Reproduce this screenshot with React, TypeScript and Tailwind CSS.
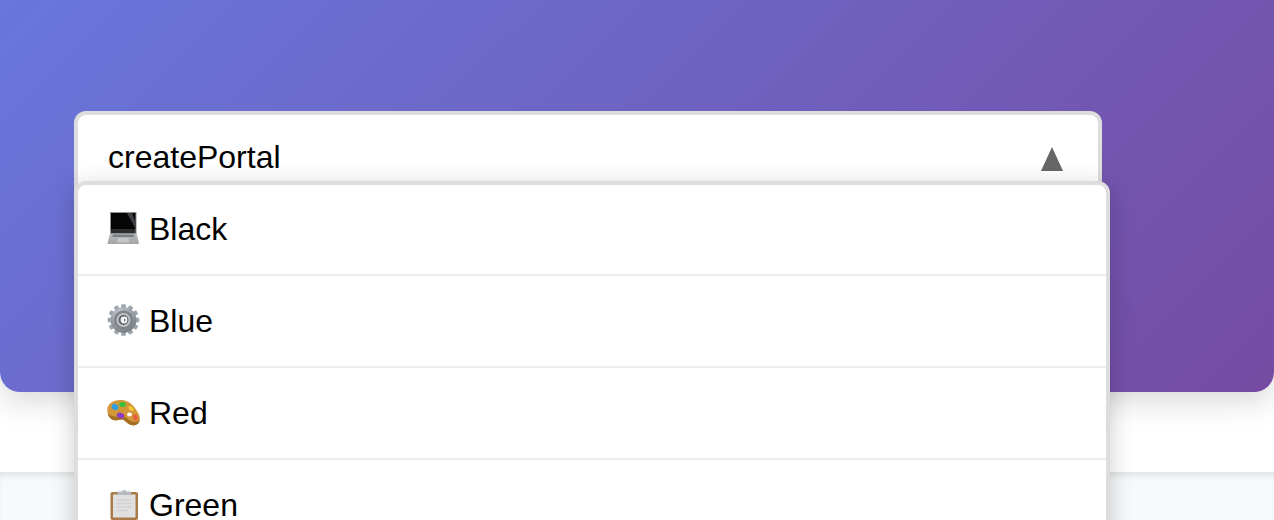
import React from "react"

function LaptopIcon() {
  return (
    <svg width="34" height="34" viewBox="0 0 34 34" className="shrink-0">
      <defs>
        <linearGradient id="lapBase" x1="0" y1="0" x2="0" y2="1">
          <stop offset="0" stopColor="#b9bbbd" />
          <stop offset="1" stopColor="#a2a4a6" />
        </linearGradient>
      </defs>
      <path d="M3 0h26.5v22H3z" fill="#8d8f91" />
      <path d="M4 1h24.5v16H4z" fill="#050505" />
      <path d="M20 1h5l3.5 9v7z" fill="#3d3f42" />
      <path d="M4 17h24.500v4.500H4z" fill="#2c2d2f" />
      <path d="M3 21.500h26.500l2.500 9.500q0 1-1 1H1.500q-1 0-1-1z" fill="url(#lapBase)" />
      <path d="M6 22.500h20.500l.8 2.500H5.200z" fill="#7c7e80" />
      <path d="M11 26h10.500l.8 4.500H10.200z" fill="#c4c6c8" />
    </svg>
  )
}

function GearIcon() {
  const teeth = [0, 30, 60, 90, 120, 150, 180, 210, 240, 270, 300, 330]
  return (
    <svg width="34" height="34" viewBox="0 0 34 34" className="shrink-0">
      <defs>
        <radialGradient id="gearFace" cx="0.4" cy="0.25" r="0.85">
          <stop offset="0" stopColor="#c6ccd2" />
          <stop offset="1" stopColor="#6f7479" />
        </radialGradient>
      </defs>
      {teeth.map((a) => (
        <path key={a} d="M13.300 8L14.500 0.200h4L19.700 8z" fill="#9aa6b0" transform={`rotate(${a} 16.500 16)`} />
      ))}
      <circle cx="16.500" cy="16" r="12.800" fill="url(#gearFace)" />
      <circle cx="16.500" cy="16" r="9.500" fill="#80848a" />
      <circle cx="16.500" cy="16" r="7" fill="#bfc3c8" />
      <circle cx="16.500" cy="16" r="5" fill="#5f6267" />
      <circle cx="17" cy="16" r="3.400" fill="#f4f5f6" />
      <path d="M17 14.500a1.500 1.500 0 0 1 0 3z" fill="#6a6d71" />
    </svg>
  )
}

function PaletteIcon() {
  return (
    <svg width="34" height="34" viewBox="0 0 34 34" className="shrink-0">
      <path d="M0.300 14C0 7.500 7 3.500 14.500 4 21.500 4.500 26 8.500 29 13.500c2.200 3.500 4.300 6.500 3.800 10C32.300 28 28.500 30 24.300 29c-4-1-5.300-4.200-8.300-5.300-3-1-5.500 1.300-9 .5C2.500 23 .6 19.500.3 14z" fill="#d3973a" />
      <path d="M0.500 16.500c.8 4 2.800 6.800 6.500 7.700 3.500.8 6-1.500 9-.5 3 1.100 4.300 4.300 8.300 5.300 4.200 1 8-1 8.500-5.500-2 2.500-5 3-8 2-3.500-1.300-5-4.200-8-5.200-3-1-6 .8-9.300.3-3.300-.6-5.500-2-7-3.600z" fill="#a56f25" />
      <ellipse cx="8" cy="11" rx="3.500" ry="2.800" fill="#2b9fe6" transform="rotate(30 8 11)" />
      <ellipse cx="15.500" cy="8.500" rx="3.300" ry="2.500" fill="#36c23a" />
      <ellipse cx="24" cy="12.500" rx="3" ry="1.800" fill="#efc93a" transform="rotate(40 24 12.500)" />
      <ellipse cx="13.500" cy="19.500" rx="3.800" ry="2.700" fill="#8c3cc9" transform="rotate(20 13.500 19.500)" />
      <ellipse cx="22.500" cy="18.500" rx="2.400" ry="1.900" fill="#ffffff" />
      <ellipse cx="28.500" cy="21.500" rx="2.300" ry="3" fill="#ee5a3c" transform="rotate(-15 28.500 21.500)" />
    </svg>
  )
}

function ClipboardIcon() {
  return (
    <svg width="34" height="34" viewBox="0 0 34 34" className="shrink-0">
      <rect x="3.500" y="4" width="27.500" height="28" rx="2" fill="#a97a45" />
      <rect x="6" y="6.500" width="22.500" height="23" fill="#e0e0e0" />
      <path d="M9 12h16M9 15.500h16M9 19h16M9 22.500h12" stroke="#d2d2d2" strokeWidth="1.500" />
      <path d="M10.500 3.500h4.500q2.300-3.500 4.600 0h4.400v3.500H10.500z" fill="#b6babe" />
    </svg>
  )
}

const options = [
  { label: "Black", icon: <LaptopIcon /> },
  { label: "Blue", icon: <GearIcon /> },
  { label: "Red", icon: <PaletteIcon /> },
  { label: "Green", icon: <ClipboardIcon /> },
]

export default function App() {
  return (
    <div className="relative h-[520px] overflow-hidden bg-white font-['Liberation_Sans',Arial,sans-serif] text-black">
      <div className="h-[392px] rounded-b-[20px] bg-[linear-gradient(135deg,#6877dc_0%,#764ba2_100%)] pl-[74px] pt-[111px] shadow-[0_10px_30px_rgba(0,0,0,0.15)]">
        <div className="flex h-[90px] w-[1028px] items-start justify-between rounded-[12px] border-4 border-[#dddddd] bg-white pl-[30px] pr-[35px] pt-[24px]">
          <span className="text-[32px] leading-[37px]">createPortal</span>
          <svg width="22" height="24" viewBox="0 0 22 24" className="mt-[8px]">
            <path d="M11 0L22 24H0z" fill="#666666" />
          </svg>
        </div>
      </div>
      <div className="mt-[80px] h-[48px] bg-[#f8f9fa] shadow-[inset_0_6px_8px_-4px_rgba(0,0,0,0.12)]" />
      <div className="absolute left-[74px] top-[181px] w-[1036px] rounded-t-[12px] border-4 border-[#dddddd] bg-white shadow-[0_5px_25px_rgba(0,0,0,0.2)]">
        <div className="-mt-px">
          {options.map((o) => (
            <div key={o.label} className="flex h-[92px] items-center gap-[8px] border-b-2 border-[#eeeeee] pl-[29px]">
              {o.icon}
              <span className="text-[32px] leading-[37px]">{o.label}</span>
            </div>
          ))}
        </div>
      </div>
    </div>
  )
}
